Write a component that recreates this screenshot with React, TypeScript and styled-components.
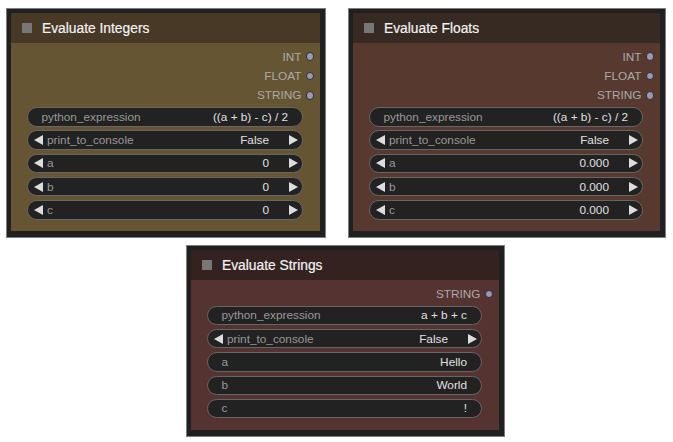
import React from 'react';
import styled, { createGlobalStyle } from 'styled-components';

type WidgetDef = {
  label: string;
  value: string;
  arrows?: boolean;
};

type NodeDef = {
  title: string;
  width: number;
  headerColor: string;
  bodyColor: string;
  outputs: string[];
  widgets: WidgetDef[];
};

const intNode: NodeDef = {
  title: 'Evaluate Integers',
  width: 320,
  headerColor: '#483826',
  bodyColor: '#665533',
  outputs: ['INT', 'FLOAT', 'STRING'],
  widgets: [
    { label: 'python_expression', value: '((a + b) - c) / 2' },
    { label: 'print_to_console', value: 'False', arrows: true },
    { label: 'a', value: '0', arrows: true },
    { label: 'b', value: '0', arrows: true },
    { label: 'c', value: '0', arrows: true },
  ],
};

const floatNode: NodeDef = {
  title: 'Evaluate Floats',
  width: 318,
  headerColor: '#372a23',
  bodyColor: '#573930',
  outputs: ['INT', 'FLOAT', 'STRING'],
  widgets: [
    { label: 'python_expression', value: '((a + b) - c) / 2' },
    { label: 'print_to_console', value: 'False', arrows: true },
    { label: 'a', value: '0.000', arrows: true },
    { label: 'b', value: '0.000', arrows: true },
    { label: 'c', value: '0.000', arrows: true },
  ],
};

const stringNode: NodeDef = {
  title: 'Evaluate Strings',
  width: 319,
  headerColor: '#342220',
  bodyColor: '#553331',
  outputs: ['STRING'],
  widgets: [
    { label: 'python_expression', value: 'a + b + c' },
    { label: 'print_to_console', value: 'False', arrows: true },
    { label: 'a', value: 'Hello' },
    { label: 'b', value: 'World' },
    { label: 'c', value: '!' },
  ],
};

const LeftArrow = () => (
  <ArrowIcon width="9" height="10" viewBox="0 0 9 10">
    <polygon points="9,0 0,5 9,10" fill="#dddddd" />
  </ArrowIcon>
);

const RightArrow = () => (
  <ArrowIcon width="9" height="10" viewBox="0 0 9 10" $right>
    <polygon points="0,0 9,5 0,10" fill="#dddddd" />
  </ArrowIcon>
);

const Widget = ({ label, value, arrows }: WidgetDef) => (
  <WidgetRow $arrows={!!arrows}>
    {arrows && <LeftArrow />}
    <WidgetLabel>{label}</WidgetLabel>
    <WidgetValue>{value}</WidgetValue>
    {arrows && <RightArrow />}
  </WidgetRow>
);

const Node = ({ node }: { node: NodeDef }) => (
  <Frame $width={node.width}>
    <Header $color={node.headerColor}>
      <Box />
      <Title>{node.title}</Title>
    </Header>
    <Body $color={node.bodyColor}>
      {node.outputs.map((name) => (
        <OutputRow key={name}>
          <span>{name}</span>
          <Dot />
        </OutputRow>
      ))}
      <WidgetList>
        {node.widgets.map((w) => (
          <Widget key={w.label} {...w} />
        ))}
      </WidgetList>
    </Body>
  </Frame>
);

export default function App() {
  return (
    <>
      <GlobalStyle />
      <Page>
        <TopRow>
          <Node node={intNode} />
          <Node node={floatNode} />
        </TopRow>
        <BottomRow>
          <Node node={stringNode} />
        </BottomRow>
      </Page>
    </>
  );
}

const GlobalStyle = createGlobalStyle`
  html, body {
    margin: 0;
    padding: 0;
    background: #ffffff;
    font-family: "Liberation Sans", Arial, sans-serif;
  }
`;

const Page = styled.div`
  width: 673px;
  height: 442px;
  padding-top: 8px;
  box-sizing: border-box;
  display: flex;
  flex-direction: column;
  gap: 7px;
`;

const TopRow = styled.div`
  display: flex;
  align-items: flex-start;
  gap: 22px;
  padding-left: 6px;
`;

const BottomRow = styled.div`
  display: flex;
  padding-left: 186px;
`;

const Frame = styled.div<{ $width: number }>`
  width: ${(p) => p.$width}px;
  box-sizing: border-box;
  border: 1px solid #7d7d7d;
  background: #202020;
  padding: 4px 5px 6px 4px;
`;

const Header = styled.div<{ $color: string }>`
  height: 30px;
  background: ${(p) => p.$color};
  display: flex;
  align-items: center;
  gap: 10px;
  padding-left: 11px;
`;

const Box = styled.div`
  width: 10px;
  height: 10px;
  background: #777777;
`;

const Title = styled.div`
  font-size: 13.8px;
  color: #f2f2f2;
  -webkit-text-stroke: 0.2px #f2f2f2;
`;

const Body = styled.div<{ $color: string }>`
  background: ${(p) => p.$color};
  padding: 4px 0 11.6px;
`;

const OutputRow = styled.div`
  height: 19.4px;
  display: flex;
  align-items: center;
  justify-content: flex-end;
  gap: 4px;
  padding-right: 6px;
  font-size: 11.8px;
  color: #aaaaaa;
`;

const Dot = styled.div`
  width: 6.5px;
  height: 6.5px;
  border-radius: 50%;
  background: #9a9ab2;
  border: 1.2px solid #2e2e38;
`;

const WidgetList = styled.div`
  display: flex;
  flex-direction: column;
  gap: 3.9px;
  margin: 2px 17px 0 16px;
`;

const WidgetRow = styled.div<{ $arrows: boolean }>`
  height: 19.4px;
  box-sizing: border-box;
  border: 1px solid #666666;
  border-radius: 10px;
  background: #222222;
  display: flex;
  align-items: center;
  font-size: 11.8px;
  padding: ${(p) => (p.$arrows ? '0 4px 0 6px' : '0 14px 0 13.5px')};
  gap: ${(p) => (p.$arrows ? '4px' : '0')};
`;

const ArrowIcon = styled.svg<{ $right?: boolean }>`
  flex-shrink: 0;
  display: block;
  margin-left: ${(p) => (p.$right ? '16px' : '0')};
`;

const WidgetLabel = styled.span`
  color: #999999;
  white-space: nowrap;
`;

const WidgetValue = styled.span`
  margin-left: auto;
  color: #e0e0e0;
  white-space: nowrap;
`;
